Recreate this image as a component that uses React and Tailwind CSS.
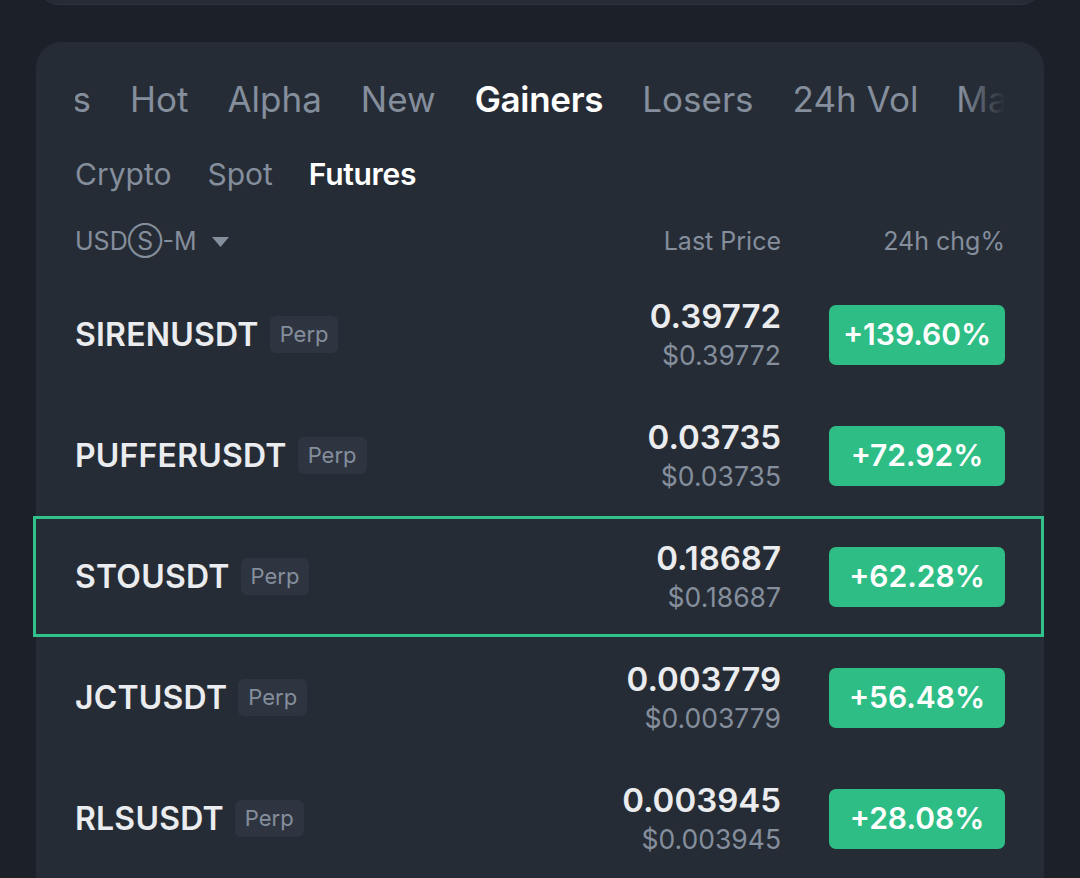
import React from 'react';

const tabs = ['Hot', 'Alpha', 'New', 'Gainers', 'Losers', '24h Vol'];

const rows = [
    { symbol: 'SIRENUSDT', price: '0.39772', change: '+139.60%' },
    { symbol: 'PUFFERUSDT', price: '0.03735', change: '+72.92%' },
    { symbol: 'STOUSDT', price: '0.18687', change: '+62.28%', active: true },
    { symbol: 'JCTUSDT', price: '0.003779', change: '+56.48%' },
    { symbol: 'RLSUSDT', price: '0.003945', change: '+28.08%' },
];

const MarketRow = ({ row }) => (
    <div
        className={`flex items-center h-[121px] ${
            row.active ? 'border-[3px] border-[#31c28c] -ml-[42px] -mr-[39px] pl-[39px] pr-[36px]' : ''
        }`}
    >
        <div className="flex-1 flex items-center gap-[11px]">
            <span className="text-[32px] font-semibold text-[#eaecef] tracking-[0.2px]">{row.symbol}</span>
            <span className="h-[37px] px-[10px] flex items-center rounded-[6px] bg-[#2f3540] text-[22px] text-[#848e9c]">Perp</span>
        </div>
        <div className="flex flex-col items-end leading-none">
            <span className="text-[33px] font-semibold text-[#eaecef]">{row.price}</span>
            <span className="mt-[9px] text-[26.5px] text-[#848e9c]">${row.price}</span>
        </div>
        <div className="ml-[48px] w-[176px] h-[60px] rounded-[7px] bg-[#2ebd85] flex items-center justify-center text-[30px] font-semibold text-white">
            {row.change}
        </div>
    </div>
);

const App = () => {
    return (
        <div className="w-[1080px] h-[878px] overflow-hidden bg-[#1c2129] px-[36px] font-['Inter','Liberation_Sans',sans-serif]">
            <div className="h-[30px] -mt-[25px] rounded-b-[24px] bg-[#262c35] border-b border-[#2c333d]"></div>

            <div className="mt-[37px] rounded-t-[26px] bg-[#262c35] px-[39px] pb-10">
                {/* main tabs */}
                <div className="relative h-[114px] flex items-center overflow-hidden text-[35px] text-[#848e9c] whitespace-nowrap">
                    <div className="w-[16px] shrink-0 flex justify-end overflow-hidden">
                        <span className="shrink-0">Favorites</span>
                    </div>
                    {tabs.map(t => (
                        <span
                            key={t}
                            className={`ml-[39px] shrink-0 ${t === 'Gainers' ? 'text-white font-semibold tracking-[-0.3px]' : ''}`}
                        >
                            {t}
                        </span>
                    ))}
                    <span className="ml-[38px] shrink-0">Markets</span>
                    <div className="absolute right-0 top-0 h-full w-[44px] bg-gradient-to-r from-transparent to-[#262c35]"></div>
                </div>

                {/* sub tabs */}
                <div className="flex items-center gap-[36px] h-[36px] text-[30px] text-[#848e9c]">
                    <span>Crypto</span>
                    <span>Spot</span>
                    <span className="text-white font-semibold tracking-[-0.3px]">Futures</span>
                </div>

                {/* header */}
                <div className="flex items-center mt-[32px] h-[36px] text-[25px] text-[#848e9c]">
                    <div className="flex-1 flex items-center">
                        <span>USDⓈ-M</span>
                        <svg className="ml-[14px]" width="19" height="12" viewBox="0 0 19 12">
                            <path d="M1 1h17l-8.5 10z" fill="#848e9c" />
                        </svg>
                    </div>
                    <span>Last Price</span>
                    <span className="w-[224px] text-right">24h chg%</span>
                </div>

                <div className="mt-[14px]">
                    {rows.map(r => (
                        <MarketRow key={r.symbol} row={r} />
                    ))}
                </div>
            </div>
        </div>
    );
};

export default App;
